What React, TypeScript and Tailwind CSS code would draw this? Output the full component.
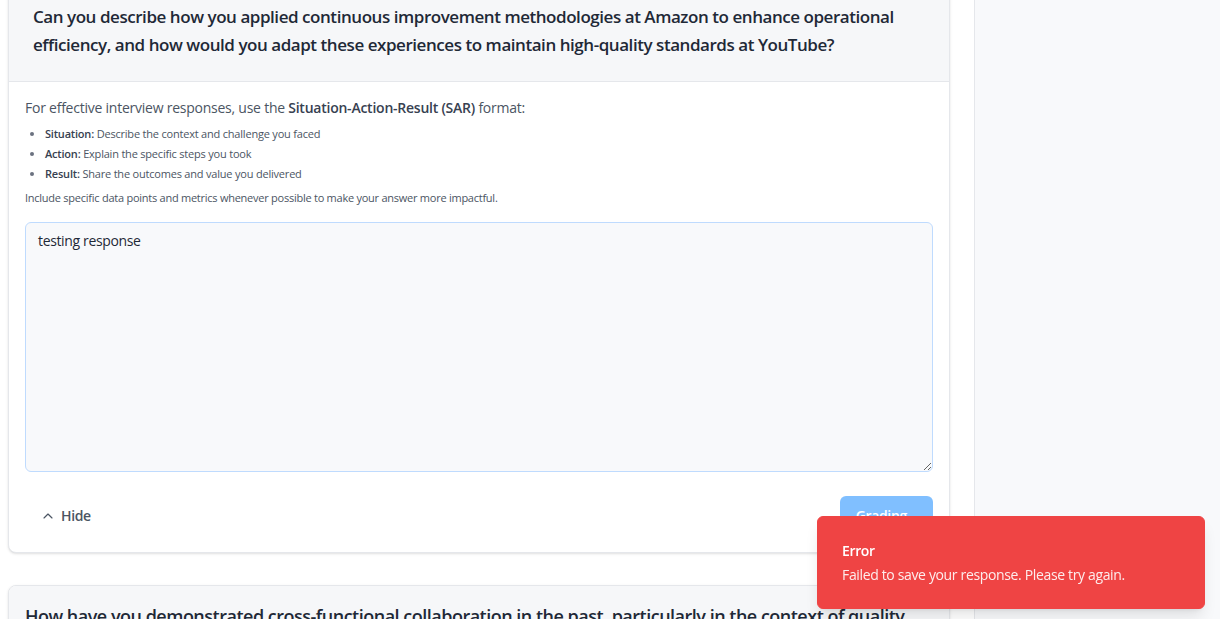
import React from "react";
import { ChevronUp } from "lucide-react";

const font = { fontFamily: '"Open Sans", "Noto Sans", sans-serif' };

export default function App() {
  return (
    <div className="h-[619px] w-[1220px] overflow-hidden bg-white flex" style={font}>
      <main className="w-[975px] shrink-0 border-r border-[#e5e7eb] bg-white pl-2 pr-[24px] overflow-hidden">
        <div className="-mt-[23px] flex flex-col gap-8">
          <section className="rounded-lg border border-[#e5e7eb] bg-white shadow-sm overflow-hidden">
            <div className="bg-[#f6f7f9] border-b border-[#e5e7eb] px-6 pt-[25px] pb-[22px]">
              <h2 className="text-[17px] leading-7 font-semibold tracking-[-0.45px] text-[#1f2937]">
                Can you describe how you applied continuous improvement methodologies at Amazon to enhance operational efficiency, and how would you adapt these experiences to maintain high-quality standards at YouTube?
              </h2>
            </div>
            <div className="p-4">
              <p className="text-sm leading-5 tracking-[-0.24px] text-[#4b5563]">
                For effective interview responses, use the <strong className="font-semibold text-[#374151]">Situation-Action-Result (SAR)</strong> format:
              </p>
              <ul className="mt-[6px] list-disc pl-5 text-[11px] leading-5 tracking-[-0.2px] text-[#4b5563] marker:text-[#6b7280]">
                <li><strong className="font-semibold text-[#374151]">Situation:</strong> Describe the context and challenge you faced</li>
                <li><strong className="font-semibold text-[#374151]">Action:</strong> Explain the specific steps you took</li>
                <li><strong className="font-semibold text-[#374151]">Result:</strong> Share the outcomes and value you delivered</li>
              </ul>
              <p className="mt-[6px] text-[11px] leading-4 tracking-[-0.25px] text-[#4b5563]">
                Include specific data points and metrics whenever possible to make your answer more impactful.
              </p>
              <textarea
                className="mt-4 block h-[250px] w-full rounded-md border border-[#bfdbfe] bg-[#f8f9fb] px-3 py-2 text-sm leading-5 tracking-[-0.35px] text-[#1f2937] outline-none"
                style={font}
                defaultValue="testing response"
              />
              <div className="mt-6 flex items-center justify-between">
                <button className="flex h-10 items-center gap-[5px] rounded-md pl-[15px] pr-3 text-sm font-semibold tracking-[-0.35px] text-[#4b5563]">
                  <ChevronUp size={16} strokeWidth={1.75} />
                  Hide
                </button>
                <button className="h-10 w-[93px] rounded-md bg-[#80bfff] text-sm font-semibold tracking-[-0.35px] text-white">
                  Grading...
                </button>
              </div>
            </div>
          </section>
          <section className="rounded-lg border border-[#e5e7eb] bg-white shadow-sm overflow-hidden">
            <div className="bg-[#f6f7f9] border-b border-[#e5e7eb] p-4">
              <h2 className="text-[18px] leading-7 font-semibold tracking-[-0.5px] text-[#1f2937]">
                How have you demonstrated cross-functional collaboration in the past, particularly in the context of quality assurance and content moderation?
              </h2>
            </div>
            <div className="h-40" />
          </section>
        </div>
      </main>
      <aside className="flex-1 bg-[#f8f9fb]" />
      <div className="fixed right-[15px] bottom-[10px] w-[388px] rounded-md border border-[#ef4444] bg-[#ef4444] px-6 pt-6 pb-[23px] pr-8 shadow-lg text-white tracking-[-0.35px]">
        <div className="grid gap-1">
          <div className="text-sm leading-5 font-semibold">Error</div>
          <div className="text-sm leading-5 opacity-90">Failed to save your response. Please try again.</div>
        </div>
      </div>
    </div>
  );
}
